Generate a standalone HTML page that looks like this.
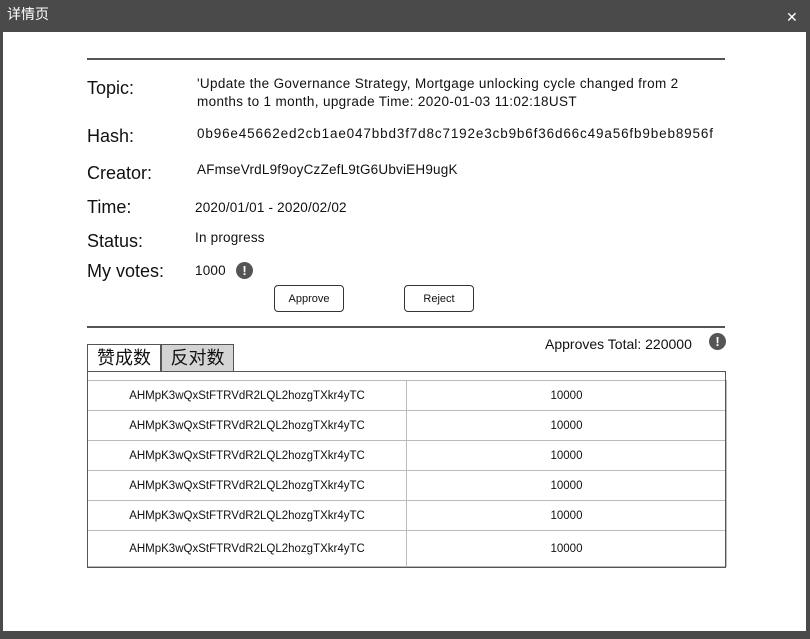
<!DOCTYPE html>
<html><head><meta charset="utf-8"><style>
*{margin:0;padding:0;box-sizing:border-box}
body{width:810px;height:639px;background:#4a4a4a;position:relative;overflow:hidden;font-family:"Liberation Sans","Noto Sans CJK SC",sans-serif;color:#111}
.t{position:absolute;white-space:nowrap;line-height:1}
.lab{font-size:18px}
.val{font-size:13.5px;letter-spacing:0.2px}
.btn{position:absolute;border:1px solid #333;border-radius:4px;background:#fff;font-size:11px;text-align:center;line-height:26px}
.ic{position:absolute;width:17px;height:17px;border-radius:50%;background:#555;color:#fff;font-weight:bold;font-size:13px;text-align:center;line-height:17px}
table{position:absolute;left:87px;top:380px;width:639px;border-collapse:collapse;font-size:11.5px;table-layout:fixed}
td{border:1px solid #bbb;text-align:center;height:30px}
</style></head><body>
<div class="t" style="left:7px;top:7px;color:#fff;font-size:14px">详情页</div>
<div class="t" style="left:786px;top:10px;color:#fff;font-size:14px">✕</div>
<div style="position:absolute;left:3px;top:32px;width:803px;height:599px;background:#fff"></div>
<div style="position:absolute;left:87px;top:58px;width:638px;height:2px;background:#555"></div>

<div class="t lab" style="left:87px;top:79px">Topic:</div>
<div class="t val" style="left:197px;top:77px;letter-spacing:0.35px">'Update the Governance Strategy, Mortgage unlocking cycle changed from 2</div>
<div class="t val" style="left:197px;top:95px;letter-spacing:0.35px">months to 1 month, upgrade Time: 2020-01-03 11:02:18UST</div>
<div class="t lab" style="left:87px;top:127px">Hash:</div>
<div class="t val" style="left:197px;top:127px;letter-spacing:0.85px">0b96e45662ed2cb1ae047bbd3f7d8c7192e3cb9b6f36d66c49a56fb9beb8956f</div>
<div class="t lab" style="left:87px;top:164px">Creator:</div>
<div class="t val" style="left:197px;top:163px">AFmseVrdL9f9oyCzZefL9tG6UbviEH9ugK</div>
<div class="t lab" style="left:87px;top:198px">Time:</div>
<div class="t val" style="left:195px;top:201px">2020/01/01 - 2020/02/02</div>
<div class="t lab" style="left:87px;top:232px">Status:</div>
<div class="t val" style="left:195px;top:231px">In progress</div>
<div class="t lab" style="left:87px;top:262px">My votes:</div>
<div class="t val" style="left:195px;top:264px">1000</div>
<div class="ic" style="left:236px;top:262px">!</div>
<div class="btn" style="left:274px;top:285px;width:70px;height:27px">Approve</div>
<div class="btn" style="left:404px;top:285px;width:70px;height:27px">Reject</div>

<div style="position:absolute;left:87px;top:326px;width:638px;height:2px;background:#555"></div>
<div class="t" style="left:545px;top:337px;font-size:14px">Approves Total: 220000</div>
<div class="ic" style="left:709px;top:333px">!</div>

<div style="position:absolute;left:87px;top:344px;width:74px;height:28px;border:1px solid #555;border-bottom:none;background:#fff;font-size:18px;text-align:center;line-height:26px">赞成数</div>
<div style="position:absolute;left:161px;top:344px;width:73px;height:27px;border:1px solid #555;border-bottom:none;background:#d4d4d4;font-size:18px;text-align:center;line-height:26px">反对数</div>
<table>
<colgroup><col style="width:319px"><col style="width:320px"></colgroup>
<tr><td>AHMpK3wQxStFTRVdR2LQL2hozgTXkr4yTC</td><td>10000</td></tr>
<tr><td>AHMpK3wQxStFTRVdR2LQL2hozgTXkr4yTC</td><td>10000</td></tr>
<tr><td>AHMpK3wQxStFTRVdR2LQL2hozgTXkr4yTC</td><td>10000</td></tr>
<tr><td>AHMpK3wQxStFTRVdR2LQL2hozgTXkr4yTC</td><td>10000</td></tr>
<tr><td>AHMpK3wQxStFTRVdR2LQL2hozgTXkr4yTC</td><td>10000</td></tr>
<tr><td style="height:36px">AHMpK3wQxStFTRVdR2LQL2hozgTXkr4yTC</td><td>10000</td></tr>
</table>
<div style="position:absolute;left:87px;top:371px;width:639px;height:197px;border:1px solid #555"></div>
</body></html>
